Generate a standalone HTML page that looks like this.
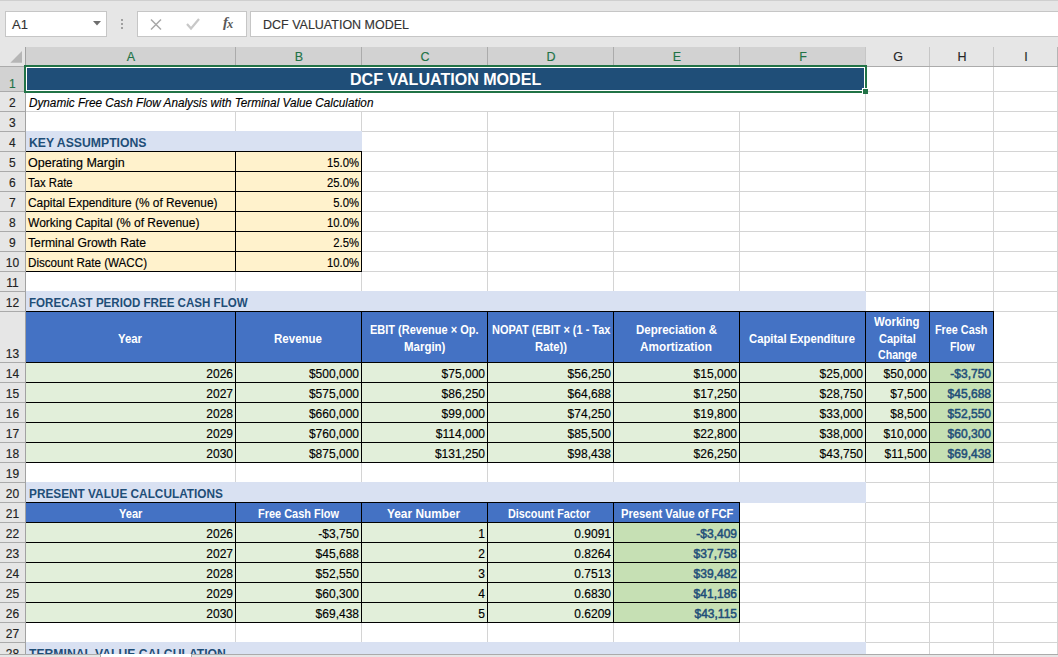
<!DOCTYPE html>
<html><head><meta charset="utf-8"><style>
html,body{margin:0;padding:0;}
body{width:1058px;height:657px;overflow:hidden;position:relative;background:#fff;font-family:'Liberation Sans', sans-serif;}
body>div,body>svg{position:absolute;}
</style></head><body>
<div style="left:0px;top:0px;width:1058px;height:47px;background:#e6e6e6;"></div>
<div style="left:0px;top:0px;width:1058px;height:1px;background:#cfcfcf;"></div>
<div style="left:5px;top:11px;width:102px;height:26px;background:#c6c6c6;"></div>
<div style="left:6px;top:12px;width:100px;height:24px;background:#ffffff;"></div>
<div style="top:18px;font-family:'Liberation Sans', sans-serif;font-size:13px;line-height:13px;color:#333;white-space:nowrap;-webkit-text-stroke:0.15px currentColor;left:12px;">A1</div>
<svg style="left:93px;top:21px" width="8" height="5"><path d="M0 0H8L4 4.5Z" fill="#6e6e6e"/></svg>
<div style="left:121px;top:19px;width:2px;height:2px;background:#a0a0a0;"></div>
<div style="left:121px;top:23px;width:2px;height:2px;background:#a0a0a0;"></div>
<div style="left:121px;top:27px;width:2px;height:2px;background:#a0a0a0;"></div>
<div style="left:137px;top:11px;width:110px;height:26px;background:#c6c6c6;"></div>
<div style="left:138px;top:12px;width:108px;height:24px;background:#ffffff;"></div>
<svg style="left:148px;top:17px" width="16" height="14"><path d="M3 2.5L13 12.5M13 2.5L3 12.5" stroke="#a8a8a8" stroke-width="1.5" fill="none"/></svg>
<svg style="left:184px;top:16px" width="18" height="15"><path d="M3 8L7 12.5L15 3" stroke="#c8c8c8" stroke-width="2.2" fill="none"/></svg>
<div style="left:223px;top:14px;font-family:'Liberation Serif',serif;font-style:italic;font-size:15px;line-height:16px;color:#595959;font-weight:bold">f<span style="font-size:12.5px;position:relative;top:1px;left:-1px">x</span></div>
<div style="left:250px;top:11px;width:808px;height:26px;background:#c6c6c6;"></div>
<div style="left:251px;top:12px;width:807px;height:24px;background:#ffffff;"></div>
<div style="top:18px;font-family:'Liberation Sans', sans-serif;font-size:13px;line-height:13px;color:#333;white-space:nowrap;-webkit-text-stroke:0.15px currentColor;left:262.70px;transform:scaleX(0.9612);transform-origin:0 0;">DCF VALUATION MODEL</div>
<div style="left:0px;top:47px;width:1058px;height:20px;background:#e6e6e6;"></div>
<div style="left:26px;top:47px;width:840px;height:19px;background:#d2d2d2;"></div>
<div style="left:0px;top:66px;width:1058px;height:1px;background:#ababab;"></div>
<svg style="left:0px;top:47px" width="25" height="19"><path d="M22 4V15.7H10.3Z" fill="#b6b6b6"/></svg>
<div style="left:235px;top:47px;width:1px;height:19px;background:#ababab;"></div>
<div style="left:361px;top:47px;width:1px;height:19px;background:#ababab;"></div>
<div style="left:487px;top:47px;width:1px;height:19px;background:#ababab;"></div>
<div style="left:613px;top:47px;width:1px;height:19px;background:#ababab;"></div>
<div style="left:739px;top:47px;width:1px;height:19px;background:#ababab;"></div>
<div style="left:865px;top:47px;width:1px;height:19px;background:#c6c6c6;"></div>
<div style="left:929px;top:47px;width:1px;height:19px;background:#c6c6c6;"></div>
<div style="left:993px;top:47px;width:1px;height:19px;background:#c6c6c6;"></div>
<div style="left:1057px;top:47px;width:1px;height:19px;background:#b4b4b4;"></div>
<div style="left:25px;top:47px;width:1px;height:19px;background:#c6c6c6;"></div>
<div style="top:51px;font-family:'Liberation Sans', sans-serif;font-size:12.5px;line-height:12.5px;color:#217346;white-space:nowrap;-webkit-text-stroke:0.15px currentColor;left:-169.0px;width:600px;text-align:center;">A</div>
<div style="top:51px;font-family:'Liberation Sans', sans-serif;font-size:12.5px;line-height:12.5px;color:#217346;white-space:nowrap;-webkit-text-stroke:0.15px currentColor;left:-1.0px;width:600px;text-align:center;">B</div>
<div style="top:51px;font-family:'Liberation Sans', sans-serif;font-size:12.5px;line-height:12.5px;color:#217346;white-space:nowrap;-webkit-text-stroke:0.15px currentColor;left:125.0px;width:600px;text-align:center;">C</div>
<div style="top:51px;font-family:'Liberation Sans', sans-serif;font-size:12.5px;line-height:12.5px;color:#217346;white-space:nowrap;-webkit-text-stroke:0.15px currentColor;left:251.0px;width:600px;text-align:center;">D</div>
<div style="top:51px;font-family:'Liberation Sans', sans-serif;font-size:12.5px;line-height:12.5px;color:#217346;white-space:nowrap;-webkit-text-stroke:0.15px currentColor;left:377.0px;width:600px;text-align:center;">E</div>
<div style="top:51px;font-family:'Liberation Sans', sans-serif;font-size:12.5px;line-height:12.5px;color:#217346;white-space:nowrap;-webkit-text-stroke:0.15px currentColor;left:503.0px;width:600px;text-align:center;">F</div>
<div style="top:51px;font-family:'Liberation Sans', sans-serif;font-size:12.5px;line-height:12.5px;color:#262626;white-space:nowrap;-webkit-text-stroke:0.15px currentColor;left:598.0px;width:600px;text-align:center;">G</div>
<div style="top:51px;font-family:'Liberation Sans', sans-serif;font-size:12.5px;line-height:12.5px;color:#262626;white-space:nowrap;-webkit-text-stroke:0.15px currentColor;left:662.0px;width:600px;text-align:center;">H</div>
<div style="top:51px;font-family:'Liberation Sans', sans-serif;font-size:12.5px;line-height:12.5px;color:#262626;white-space:nowrap;-webkit-text-stroke:0.15px currentColor;left:726.0px;width:600px;text-align:center;">I</div>
<div style="left:0px;top:67px;width:25px;height:587px;background:#e6e6e6;"></div>
<div style="left:0px;top:67px;width:25px;height:25px;background:#d2d2d2;"></div>
<div style="left:0px;top:91px;width:25px;height:1px;background:#aaaaaa;"></div>
<div style="top:78px;font-family:'Liberation Sans', sans-serif;font-size:12px;line-height:12px;color:#217346;white-space:nowrap;-webkit-text-stroke:0.15px currentColor;left:-287.6px;width:600px;text-align:center;">1</div>
<div style="left:0px;top:111px;width:25px;height:1px;background:#aaaaaa;"></div>
<div style="top:97px;font-family:'Liberation Sans', sans-serif;font-size:12px;line-height:12px;color:#222;white-space:nowrap;-webkit-text-stroke:0.15px currentColor;left:-287.6px;width:600px;text-align:center;">2</div>
<div style="left:0px;top:131px;width:25px;height:1px;background:#aaaaaa;"></div>
<div style="top:117px;font-family:'Liberation Sans', sans-serif;font-size:12px;line-height:12px;color:#222;white-space:nowrap;-webkit-text-stroke:0.15px currentColor;left:-287.6px;width:600px;text-align:center;">3</div>
<div style="left:0px;top:151px;width:25px;height:1px;background:#aaaaaa;"></div>
<div style="top:137px;font-family:'Liberation Sans', sans-serif;font-size:12px;line-height:12px;color:#222;white-space:nowrap;-webkit-text-stroke:0.15px currentColor;left:-287.6px;width:600px;text-align:center;">4</div>
<div style="left:0px;top:171px;width:25px;height:1px;background:#aaaaaa;"></div>
<div style="top:157px;font-family:'Liberation Sans', sans-serif;font-size:12px;line-height:12px;color:#222;white-space:nowrap;-webkit-text-stroke:0.15px currentColor;left:-287.6px;width:600px;text-align:center;">5</div>
<div style="left:0px;top:191px;width:25px;height:1px;background:#aaaaaa;"></div>
<div style="top:177px;font-family:'Liberation Sans', sans-serif;font-size:12px;line-height:12px;color:#222;white-space:nowrap;-webkit-text-stroke:0.15px currentColor;left:-287.6px;width:600px;text-align:center;">6</div>
<div style="left:0px;top:211px;width:25px;height:1px;background:#aaaaaa;"></div>
<div style="top:197px;font-family:'Liberation Sans', sans-serif;font-size:12px;line-height:12px;color:#222;white-space:nowrap;-webkit-text-stroke:0.15px currentColor;left:-287.6px;width:600px;text-align:center;">7</div>
<div style="left:0px;top:231px;width:25px;height:1px;background:#aaaaaa;"></div>
<div style="top:217px;font-family:'Liberation Sans', sans-serif;font-size:12px;line-height:12px;color:#222;white-space:nowrap;-webkit-text-stroke:0.15px currentColor;left:-287.6px;width:600px;text-align:center;">8</div>
<div style="left:0px;top:251px;width:25px;height:1px;background:#aaaaaa;"></div>
<div style="top:237px;font-family:'Liberation Sans', sans-serif;font-size:12px;line-height:12px;color:#222;white-space:nowrap;-webkit-text-stroke:0.15px currentColor;left:-287.6px;width:600px;text-align:center;">9</div>
<div style="left:0px;top:271px;width:25px;height:1px;background:#aaaaaa;"></div>
<div style="top:257px;font-family:'Liberation Sans', sans-serif;font-size:12px;line-height:12px;color:#222;white-space:nowrap;-webkit-text-stroke:0.15px currentColor;left:-287.6px;width:600px;text-align:center;">10</div>
<div style="left:0px;top:291px;width:25px;height:1px;background:#aaaaaa;"></div>
<div style="top:277px;font-family:'Liberation Sans', sans-serif;font-size:12px;line-height:12px;color:#222;white-space:nowrap;-webkit-text-stroke:0.15px currentColor;left:-287.6px;width:600px;text-align:center;">11</div>
<div style="left:0px;top:311px;width:25px;height:1px;background:#aaaaaa;"></div>
<div style="top:297px;font-family:'Liberation Sans', sans-serif;font-size:12px;line-height:12px;color:#222;white-space:nowrap;-webkit-text-stroke:0.15px currentColor;left:-287.6px;width:600px;text-align:center;">12</div>
<div style="left:0px;top:362px;width:25px;height:1px;background:#aaaaaa;"></div>
<div style="top:348px;font-family:'Liberation Sans', sans-serif;font-size:12px;line-height:12px;color:#222;white-space:nowrap;-webkit-text-stroke:0.15px currentColor;left:-287.6px;width:600px;text-align:center;">13</div>
<div style="left:0px;top:382px;width:25px;height:1px;background:#aaaaaa;"></div>
<div style="top:368px;font-family:'Liberation Sans', sans-serif;font-size:12px;line-height:12px;color:#222;white-space:nowrap;-webkit-text-stroke:0.15px currentColor;left:-287.6px;width:600px;text-align:center;">14</div>
<div style="left:0px;top:402px;width:25px;height:1px;background:#aaaaaa;"></div>
<div style="top:388px;font-family:'Liberation Sans', sans-serif;font-size:12px;line-height:12px;color:#222;white-space:nowrap;-webkit-text-stroke:0.15px currentColor;left:-287.6px;width:600px;text-align:center;">15</div>
<div style="left:0px;top:422px;width:25px;height:1px;background:#aaaaaa;"></div>
<div style="top:408px;font-family:'Liberation Sans', sans-serif;font-size:12px;line-height:12px;color:#222;white-space:nowrap;-webkit-text-stroke:0.15px currentColor;left:-287.6px;width:600px;text-align:center;">16</div>
<div style="left:0px;top:442px;width:25px;height:1px;background:#aaaaaa;"></div>
<div style="top:428px;font-family:'Liberation Sans', sans-serif;font-size:12px;line-height:12px;color:#222;white-space:nowrap;-webkit-text-stroke:0.15px currentColor;left:-287.6px;width:600px;text-align:center;">17</div>
<div style="left:0px;top:462px;width:25px;height:1px;background:#aaaaaa;"></div>
<div style="top:448px;font-family:'Liberation Sans', sans-serif;font-size:12px;line-height:12px;color:#222;white-space:nowrap;-webkit-text-stroke:0.15px currentColor;left:-287.6px;width:600px;text-align:center;">18</div>
<div style="left:0px;top:482px;width:25px;height:1px;background:#aaaaaa;"></div>
<div style="top:468px;font-family:'Liberation Sans', sans-serif;font-size:12px;line-height:12px;color:#222;white-space:nowrap;-webkit-text-stroke:0.15px currentColor;left:-287.6px;width:600px;text-align:center;">19</div>
<div style="left:0px;top:502px;width:25px;height:1px;background:#aaaaaa;"></div>
<div style="top:488px;font-family:'Liberation Sans', sans-serif;font-size:12px;line-height:12px;color:#222;white-space:nowrap;-webkit-text-stroke:0.15px currentColor;left:-287.6px;width:600px;text-align:center;">20</div>
<div style="left:0px;top:522px;width:25px;height:1px;background:#aaaaaa;"></div>
<div style="top:508px;font-family:'Liberation Sans', sans-serif;font-size:12px;line-height:12px;color:#222;white-space:nowrap;-webkit-text-stroke:0.15px currentColor;left:-287.6px;width:600px;text-align:center;">21</div>
<div style="left:0px;top:542px;width:25px;height:1px;background:#aaaaaa;"></div>
<div style="top:528px;font-family:'Liberation Sans', sans-serif;font-size:12px;line-height:12px;color:#222;white-space:nowrap;-webkit-text-stroke:0.15px currentColor;left:-287.6px;width:600px;text-align:center;">22</div>
<div style="left:0px;top:562px;width:25px;height:1px;background:#aaaaaa;"></div>
<div style="top:548px;font-family:'Liberation Sans', sans-serif;font-size:12px;line-height:12px;color:#222;white-space:nowrap;-webkit-text-stroke:0.15px currentColor;left:-287.6px;width:600px;text-align:center;">23</div>
<div style="left:0px;top:582px;width:25px;height:1px;background:#aaaaaa;"></div>
<div style="top:568px;font-family:'Liberation Sans', sans-serif;font-size:12px;line-height:12px;color:#222;white-space:nowrap;-webkit-text-stroke:0.15px currentColor;left:-287.6px;width:600px;text-align:center;">24</div>
<div style="left:0px;top:602px;width:25px;height:1px;background:#aaaaaa;"></div>
<div style="top:588px;font-family:'Liberation Sans', sans-serif;font-size:12px;line-height:12px;color:#222;white-space:nowrap;-webkit-text-stroke:0.15px currentColor;left:-287.6px;width:600px;text-align:center;">25</div>
<div style="left:0px;top:622px;width:25px;height:1px;background:#aaaaaa;"></div>
<div style="top:608px;font-family:'Liberation Sans', sans-serif;font-size:12px;line-height:12px;color:#222;white-space:nowrap;-webkit-text-stroke:0.15px currentColor;left:-287.6px;width:600px;text-align:center;">26</div>
<div style="left:0px;top:642px;width:25px;height:1px;background:#aaaaaa;"></div>
<div style="top:628px;font-family:'Liberation Sans', sans-serif;font-size:12px;line-height:12px;color:#222;white-space:nowrap;-webkit-text-stroke:0.15px currentColor;left:-287.6px;width:600px;text-align:center;">27</div>
<div style="top:648px;font-family:'Liberation Sans', sans-serif;font-size:12px;line-height:12px;color:#222;white-space:nowrap;-webkit-text-stroke:0.15px currentColor;left:-287.6px;width:600px;text-align:center;">28</div>
<div style="left:26px;top:67px;width:1032px;height:587px;background:#ffffff;"></div>
<div style="left:235px;top:112px;width:1px;height:542px;background:#d4d4d4;"></div>
<div style="left:361px;top:112px;width:1px;height:542px;background:#d4d4d4;"></div>
<div style="left:487px;top:112px;width:1px;height:542px;background:#d4d4d4;"></div>
<div style="left:613px;top:112px;width:1px;height:542px;background:#d4d4d4;"></div>
<div style="left:739px;top:112px;width:1px;height:542px;background:#d4d4d4;"></div>
<div style="left:865px;top:67px;width:1px;height:587px;background:#d4d4d4;"></div>
<div style="left:929px;top:67px;width:1px;height:587px;background:#d4d4d4;"></div>
<div style="left:993px;top:67px;width:1px;height:587px;background:#d4d4d4;"></div>
<div style="left:1057px;top:67px;width:1px;height:587px;background:#d4d4d4;"></div>
<div style="left:26px;top:91px;width:1032px;height:1px;background:#d4d4d4;"></div>
<div style="left:26px;top:111px;width:1032px;height:1px;background:#d4d4d4;"></div>
<div style="left:26px;top:131px;width:1032px;height:1px;background:#d4d4d4;"></div>
<div style="left:26px;top:151px;width:1032px;height:1px;background:#d4d4d4;"></div>
<div style="left:26px;top:171px;width:1032px;height:1px;background:#d4d4d4;"></div>
<div style="left:26px;top:191px;width:1032px;height:1px;background:#d4d4d4;"></div>
<div style="left:26px;top:211px;width:1032px;height:1px;background:#d4d4d4;"></div>
<div style="left:26px;top:231px;width:1032px;height:1px;background:#d4d4d4;"></div>
<div style="left:26px;top:251px;width:1032px;height:1px;background:#d4d4d4;"></div>
<div style="left:26px;top:271px;width:1032px;height:1px;background:#d4d4d4;"></div>
<div style="left:26px;top:291px;width:1032px;height:1px;background:#d4d4d4;"></div>
<div style="left:26px;top:311px;width:1032px;height:1px;background:#d4d4d4;"></div>
<div style="left:26px;top:362px;width:1032px;height:1px;background:#d4d4d4;"></div>
<div style="left:26px;top:382px;width:1032px;height:1px;background:#d4d4d4;"></div>
<div style="left:26px;top:402px;width:1032px;height:1px;background:#d4d4d4;"></div>
<div style="left:26px;top:422px;width:1032px;height:1px;background:#d4d4d4;"></div>
<div style="left:26px;top:442px;width:1032px;height:1px;background:#d4d4d4;"></div>
<div style="left:26px;top:462px;width:1032px;height:1px;background:#d4d4d4;"></div>
<div style="left:26px;top:482px;width:1032px;height:1px;background:#d4d4d4;"></div>
<div style="left:26px;top:502px;width:1032px;height:1px;background:#d4d4d4;"></div>
<div style="left:26px;top:522px;width:1032px;height:1px;background:#d4d4d4;"></div>
<div style="left:26px;top:542px;width:1032px;height:1px;background:#d4d4d4;"></div>
<div style="left:26px;top:562px;width:1032px;height:1px;background:#d4d4d4;"></div>
<div style="left:26px;top:582px;width:1032px;height:1px;background:#d4d4d4;"></div>
<div style="left:26px;top:602px;width:1032px;height:1px;background:#d4d4d4;"></div>
<div style="left:26px;top:622px;width:1032px;height:1px;background:#d4d4d4;"></div>
<div style="left:26px;top:642px;width:1032px;height:1px;background:#d4d4d4;"></div>
<div style="left:26px;top:67px;width:840px;height:25px;background:#1f4e78;"></div>
<div style="left:26px;top:131px;width:336px;height:21px;background:#d9e1f2;"></div>
<div style="left:26px;top:151px;width:336px;height:121px;background:#fff2cc;"></div>
<div style="left:26px;top:291px;width:840px;height:21px;background:#d9e1f2;"></div>
<div style="left:26px;top:311px;width:968px;height:52px;background:#4472c4;"></div>
<div style="left:26px;top:362px;width:904px;height:101px;background:#e2efda;"></div>
<div style="left:929px;top:362px;width:65px;height:101px;background:#c6e0b4;"></div>
<div style="left:26px;top:482px;width:840px;height:21px;background:#d9e1f2;"></div>
<div style="left:26px;top:502px;width:714px;height:21px;background:#4472c4;"></div>
<div style="left:26px;top:522px;width:588px;height:101px;background:#e2efda;"></div>
<div style="left:613px;top:522px;width:127px;height:101px;background:#c6e0b4;"></div>
<div style="left:26px;top:642px;width:840px;height:12px;background:#d9e1f2;"></div>
<div style="left:25px;top:151px;width:1px;height:121px;background:#000;"></div>
<div style="left:235px;top:151px;width:1px;height:121px;background:#000;"></div>
<div style="left:361px;top:151px;width:1px;height:121px;background:#000;"></div>
<div style="left:25px;top:151px;width:337px;height:1px;background:#000;"></div>
<div style="left:25px;top:171px;width:337px;height:1px;background:#000;"></div>
<div style="left:25px;top:191px;width:337px;height:1px;background:#000;"></div>
<div style="left:25px;top:211px;width:337px;height:1px;background:#000;"></div>
<div style="left:25px;top:231px;width:337px;height:1px;background:#000;"></div>
<div style="left:25px;top:251px;width:337px;height:1px;background:#000;"></div>
<div style="left:25px;top:271px;width:337px;height:1px;background:#000;"></div>
<div style="left:25px;top:311px;width:1px;height:152px;background:#000;"></div>
<div style="left:235px;top:311px;width:1px;height:152px;background:#000;"></div>
<div style="left:361px;top:311px;width:1px;height:152px;background:#000;"></div>
<div style="left:487px;top:311px;width:1px;height:152px;background:#000;"></div>
<div style="left:613px;top:311px;width:1px;height:152px;background:#000;"></div>
<div style="left:739px;top:311px;width:1px;height:152px;background:#000;"></div>
<div style="left:865px;top:311px;width:1px;height:152px;background:#000;"></div>
<div style="left:929px;top:311px;width:1px;height:152px;background:#000;"></div>
<div style="left:993px;top:311px;width:1px;height:152px;background:#000;"></div>
<div style="left:25px;top:311px;width:969px;height:1px;background:#000;"></div>
<div style="left:25px;top:362px;width:969px;height:1px;background:#000;"></div>
<div style="left:25px;top:382px;width:969px;height:1px;background:#000;"></div>
<div style="left:25px;top:402px;width:969px;height:1px;background:#000;"></div>
<div style="left:25px;top:422px;width:969px;height:1px;background:#000;"></div>
<div style="left:25px;top:442px;width:969px;height:1px;background:#000;"></div>
<div style="left:25px;top:462px;width:969px;height:1px;background:#000;"></div>
<div style="left:25px;top:502px;width:1px;height:121px;background:#000;"></div>
<div style="left:235px;top:502px;width:1px;height:121px;background:#000;"></div>
<div style="left:361px;top:502px;width:1px;height:121px;background:#000;"></div>
<div style="left:487px;top:502px;width:1px;height:121px;background:#000;"></div>
<div style="left:613px;top:502px;width:1px;height:121px;background:#000;"></div>
<div style="left:739px;top:502px;width:1px;height:121px;background:#000;"></div>
<div style="left:25px;top:502px;width:715px;height:1px;background:#000;"></div>
<div style="left:25px;top:522px;width:715px;height:1px;background:#000;"></div>
<div style="left:25px;top:542px;width:715px;height:1px;background:#000;"></div>
<div style="left:25px;top:562px;width:715px;height:1px;background:#000;"></div>
<div style="left:25px;top:582px;width:715px;height:1px;background:#000;"></div>
<div style="left:25px;top:602px;width:715px;height:1px;background:#000;"></div>
<div style="left:25px;top:622px;width:715px;height:1px;background:#000;"></div>
<div style="top:72px;font-family:'Liberation Sans', sans-serif;font-size:16px;line-height:16px;color:#fff;white-space:nowrap;font-weight:bold;left:350.00px;transform:scaleX(1.0037);transform-origin:0 0;">DCF VALUATION MODEL</div>
<div style="top:97px;font-family:'Liberation Sans', sans-serif;font-size:12px;line-height:12px;color:#000;white-space:nowrap;font-style:italic;-webkit-text-stroke:0.15px currentColor;left:28.70px;transform:scaleX(0.9781);transform-origin:0 0;">Dynamic Free Cash Flow Analysis with Terminal Value Calculation</div>
<div style="top:137px;font-family:'Liberation Sans', sans-serif;font-size:12px;line-height:12px;color:#1f4e78;white-space:nowrap;font-weight:bold;left:28.60px;transform:scaleX(1.0183);transform-origin:0 0;">KEY ASSUMPTIONS</div>
<div style="top:157px;font-family:'Liberation Sans', sans-serif;font-size:12px;line-height:12px;color:#000;white-space:nowrap;-webkit-text-stroke:0.15px currentColor;left:28.40px;transform:scaleX(1.0430);transform-origin:0 0;">Operating Margin</div>
<div style="top:157px;font-family:'Liberation Sans', sans-serif;font-size:12px;line-height:12px;color:#000;white-space:nowrap;-webkit-text-stroke:0.15px currentColor;left:-41px;width:400px;text-align:right;transform:scaleX(0.94);transform-origin:right;">15.0%</div>
<div style="top:177px;font-family:'Liberation Sans', sans-serif;font-size:12px;line-height:12px;color:#000;white-space:nowrap;-webkit-text-stroke:0.15px currentColor;left:28.40px;transform:scaleX(0.9417);transform-origin:0 0;">Tax Rate</div>
<div style="top:177px;font-family:'Liberation Sans', sans-serif;font-size:12px;line-height:12px;color:#000;white-space:nowrap;-webkit-text-stroke:0.15px currentColor;left:-41px;width:400px;text-align:right;transform:scaleX(0.94);transform-origin:right;">25.0%</div>
<div style="top:197px;font-family:'Liberation Sans', sans-serif;font-size:12px;line-height:12px;color:#000;white-space:nowrap;-webkit-text-stroke:0.15px currentColor;left:28.40px;transform:scaleX(0.9901);transform-origin:0 0;">Capital Expenditure (% of Revenue)</div>
<div style="top:197px;font-family:'Liberation Sans', sans-serif;font-size:12px;line-height:12px;color:#000;white-space:nowrap;-webkit-text-stroke:0.15px currentColor;left:-41px;width:400px;text-align:right;transform:scaleX(0.94);transform-origin:right;">5.0%</div>
<div style="top:217px;font-family:'Liberation Sans', sans-serif;font-size:12px;line-height:12px;color:#000;white-space:nowrap;-webkit-text-stroke:0.15px currentColor;left:28.40px;transform:scaleX(1.0018);transform-origin:0 0;">Working Capital (% of Revenue)</div>
<div style="top:217px;font-family:'Liberation Sans', sans-serif;font-size:12px;line-height:12px;color:#000;white-space:nowrap;-webkit-text-stroke:0.15px currentColor;left:-41px;width:400px;text-align:right;transform:scaleX(0.94);transform-origin:right;">10.0%</div>
<div style="top:237px;font-family:'Liberation Sans', sans-serif;font-size:12px;line-height:12px;color:#000;white-space:nowrap;-webkit-text-stroke:0.15px currentColor;left:28.40px;transform:scaleX(1.0172);transform-origin:0 0;">Terminal Growth Rate</div>
<div style="top:237px;font-family:'Liberation Sans', sans-serif;font-size:12px;line-height:12px;color:#000;white-space:nowrap;-webkit-text-stroke:0.15px currentColor;left:-41px;width:400px;text-align:right;transform:scaleX(0.94);transform-origin:right;">2.5%</div>
<div style="top:257px;font-family:'Liberation Sans', sans-serif;font-size:12px;line-height:12px;color:#000;white-space:nowrap;-webkit-text-stroke:0.15px currentColor;left:28.40px;transform:scaleX(0.9683);transform-origin:0 0;">Discount Rate (WACC)</div>
<div style="top:257px;font-family:'Liberation Sans', sans-serif;font-size:12px;line-height:12px;color:#000;white-space:nowrap;-webkit-text-stroke:0.15px currentColor;left:-41px;width:400px;text-align:right;transform:scaleX(0.94);transform-origin:right;">10.0%</div>
<div style="top:297px;font-family:'Liberation Sans', sans-serif;font-size:12px;line-height:12px;color:#1f4e78;white-space:nowrap;font-weight:bold;left:28.50px;transform:scaleX(0.9648);transform-origin:0 0;">FORECAST PERIOD FREE CASH FLOW</div>
<div style="top:333px;font-family:'Liberation Sans', sans-serif;font-size:12px;line-height:12px;color:#fff;white-space:nowrap;font-weight:bold;left:118.40px;transform:scaleX(0.9462);transform-origin:0 0;">Year</div>
<div style="top:333px;font-family:'Liberation Sans', sans-serif;font-size:12px;line-height:12px;color:#fff;white-space:nowrap;font-weight:bold;left:274.00px;transform:scaleX(0.9600);transform-origin:0 0;">Revenue</div>
<div style="top:324px;font-family:'Liberation Sans', sans-serif;font-size:12px;line-height:12px;color:#fff;white-space:nowrap;font-weight:bold;left:370.30px;transform:scaleX(0.9169);transform-origin:0 0;">EBIT (Revenue × Op.</div>
<div style="top:341px;font-family:'Liberation Sans', sans-serif;font-size:12px;line-height:12px;color:#fff;white-space:nowrap;font-weight:bold;left:403.70px;transform:scaleX(0.9558);transform-origin:0 0;">Margin)</div>
<div style="top:324px;font-family:'Liberation Sans', sans-serif;font-size:12px;line-height:12px;color:#fff;white-space:nowrap;font-weight:bold;left:491.50px;transform:scaleX(0.9131);transform-origin:0 0;">NOPAT (EBIT × (1 - Tax</div>
<div style="top:341px;font-family:'Liberation Sans', sans-serif;font-size:12px;line-height:12px;color:#fff;white-space:nowrap;font-weight:bold;left:534.50px;transform:scaleX(0.9382);transform-origin:0 0;">Rate))</div>
<div style="top:324px;font-family:'Liberation Sans', sans-serif;font-size:12px;line-height:12px;color:#fff;white-space:nowrap;font-weight:bold;left:635.50px;transform:scaleX(0.9576);transform-origin:0 0;">Depreciation &amp;</div>
<div style="top:341px;font-family:'Liberation Sans', sans-serif;font-size:12px;line-height:12px;color:#fff;white-space:nowrap;font-weight:bold;left:640.40px;transform:scaleX(0.9808);transform-origin:0 0;">Amortization</div>
<div style="top:333px;font-family:'Liberation Sans', sans-serif;font-size:12px;line-height:12px;color:#fff;white-space:nowrap;font-weight:bold;left:749.30px;transform:scaleX(0.9398);transform-origin:0 0;">Capital Expenditure</div>
<div style="top:316px;font-family:'Liberation Sans', sans-serif;font-size:12px;line-height:12px;color:#fff;white-space:nowrap;font-weight:bold;left:874.40px;transform:scaleX(0.9500);transform-origin:0 0;">Working</div>
<div style="top:333px;font-family:'Liberation Sans', sans-serif;font-size:12px;line-height:12px;color:#fff;white-space:nowrap;font-weight:bold;left:879.30px;transform:scaleX(0.9200);transform-origin:0 0;">Capital</div>
<div style="top:349px;font-family:'Liberation Sans', sans-serif;font-size:12px;line-height:12px;color:#fff;white-space:nowrap;font-weight:bold;left:877.70px;transform:scaleX(0.8841);transform-origin:0 0;">Change</div>
<div style="top:324px;font-family:'Liberation Sans', sans-serif;font-size:12px;line-height:12px;color:#fff;white-space:nowrap;font-weight:bold;left:935.40px;transform:scaleX(0.9017);transform-origin:0 0;">Free Cash</div>
<div style="top:341px;font-family:'Liberation Sans', sans-serif;font-size:12px;line-height:12px;color:#fff;white-space:nowrap;font-weight:bold;left:949.60px;transform:scaleX(0.8964);transform-origin:0 0;">Flow</div>
<div style="top:368px;font-family:'Liberation Sans', sans-serif;font-size:12px;line-height:12px;color:#000;white-space:nowrap;-webkit-text-stroke:0.15px currentColor;left:-167px;width:400px;text-align:right;">2026</div>
<div style="top:368px;font-family:'Liberation Sans', sans-serif;font-size:12px;line-height:12px;color:#000;white-space:nowrap;-webkit-text-stroke:0.15px currentColor;left:-41px;width:400px;text-align:right;">$500,000</div>
<div style="top:368px;font-family:'Liberation Sans', sans-serif;font-size:12px;line-height:12px;color:#000;white-space:nowrap;-webkit-text-stroke:0.15px currentColor;left:85px;width:400px;text-align:right;">$75,000</div>
<div style="top:368px;font-family:'Liberation Sans', sans-serif;font-size:12px;line-height:12px;color:#000;white-space:nowrap;-webkit-text-stroke:0.15px currentColor;left:211px;width:400px;text-align:right;">$56,250</div>
<div style="top:368px;font-family:'Liberation Sans', sans-serif;font-size:12px;line-height:12px;color:#000;white-space:nowrap;-webkit-text-stroke:0.15px currentColor;left:337px;width:400px;text-align:right;">$15,000</div>
<div style="top:368px;font-family:'Liberation Sans', sans-serif;font-size:12px;line-height:12px;color:#000;white-space:nowrap;-webkit-text-stroke:0.15px currentColor;left:463px;width:400px;text-align:right;">$25,000</div>
<div style="top:368px;font-family:'Liberation Sans', sans-serif;font-size:12px;line-height:12px;color:#000;white-space:nowrap;-webkit-text-stroke:0.15px currentColor;left:527px;width:400px;text-align:right;">$50,000</div>
<div style="top:368px;font-family:'Liberation Sans', sans-serif;font-size:12px;line-height:12px;color:#1f4e78;white-space:nowrap;left:591px;width:400px;text-align:right;-webkit-text-stroke:0.5px #1f4e78;">-$3,750</div>
<div style="top:388px;font-family:'Liberation Sans', sans-serif;font-size:12px;line-height:12px;color:#000;white-space:nowrap;-webkit-text-stroke:0.15px currentColor;left:-167px;width:400px;text-align:right;">2027</div>
<div style="top:388px;font-family:'Liberation Sans', sans-serif;font-size:12px;line-height:12px;color:#000;white-space:nowrap;-webkit-text-stroke:0.15px currentColor;left:-41px;width:400px;text-align:right;">$575,000</div>
<div style="top:388px;font-family:'Liberation Sans', sans-serif;font-size:12px;line-height:12px;color:#000;white-space:nowrap;-webkit-text-stroke:0.15px currentColor;left:85px;width:400px;text-align:right;">$86,250</div>
<div style="top:388px;font-family:'Liberation Sans', sans-serif;font-size:12px;line-height:12px;color:#000;white-space:nowrap;-webkit-text-stroke:0.15px currentColor;left:211px;width:400px;text-align:right;">$64,688</div>
<div style="top:388px;font-family:'Liberation Sans', sans-serif;font-size:12px;line-height:12px;color:#000;white-space:nowrap;-webkit-text-stroke:0.15px currentColor;left:337px;width:400px;text-align:right;">$17,250</div>
<div style="top:388px;font-family:'Liberation Sans', sans-serif;font-size:12px;line-height:12px;color:#000;white-space:nowrap;-webkit-text-stroke:0.15px currentColor;left:463px;width:400px;text-align:right;">$28,750</div>
<div style="top:388px;font-family:'Liberation Sans', sans-serif;font-size:12px;line-height:12px;color:#000;white-space:nowrap;-webkit-text-stroke:0.15px currentColor;left:527px;width:400px;text-align:right;">$7,500</div>
<div style="top:388px;font-family:'Liberation Sans', sans-serif;font-size:12px;line-height:12px;color:#1f4e78;white-space:nowrap;left:591px;width:400px;text-align:right;-webkit-text-stroke:0.5px #1f4e78;">$45,688</div>
<div style="top:408px;font-family:'Liberation Sans', sans-serif;font-size:12px;line-height:12px;color:#000;white-space:nowrap;-webkit-text-stroke:0.15px currentColor;left:-167px;width:400px;text-align:right;">2028</div>
<div style="top:408px;font-family:'Liberation Sans', sans-serif;font-size:12px;line-height:12px;color:#000;white-space:nowrap;-webkit-text-stroke:0.15px currentColor;left:-41px;width:400px;text-align:right;">$660,000</div>
<div style="top:408px;font-family:'Liberation Sans', sans-serif;font-size:12px;line-height:12px;color:#000;white-space:nowrap;-webkit-text-stroke:0.15px currentColor;left:85px;width:400px;text-align:right;">$99,000</div>
<div style="top:408px;font-family:'Liberation Sans', sans-serif;font-size:12px;line-height:12px;color:#000;white-space:nowrap;-webkit-text-stroke:0.15px currentColor;left:211px;width:400px;text-align:right;">$74,250</div>
<div style="top:408px;font-family:'Liberation Sans', sans-serif;font-size:12px;line-height:12px;color:#000;white-space:nowrap;-webkit-text-stroke:0.15px currentColor;left:337px;width:400px;text-align:right;">$19,800</div>
<div style="top:408px;font-family:'Liberation Sans', sans-serif;font-size:12px;line-height:12px;color:#000;white-space:nowrap;-webkit-text-stroke:0.15px currentColor;left:463px;width:400px;text-align:right;">$33,000</div>
<div style="top:408px;font-family:'Liberation Sans', sans-serif;font-size:12px;line-height:12px;color:#000;white-space:nowrap;-webkit-text-stroke:0.15px currentColor;left:527px;width:400px;text-align:right;">$8,500</div>
<div style="top:408px;font-family:'Liberation Sans', sans-serif;font-size:12px;line-height:12px;color:#1f4e78;white-space:nowrap;left:591px;width:400px;text-align:right;-webkit-text-stroke:0.5px #1f4e78;">$52,550</div>
<div style="top:428px;font-family:'Liberation Sans', sans-serif;font-size:12px;line-height:12px;color:#000;white-space:nowrap;-webkit-text-stroke:0.15px currentColor;left:-167px;width:400px;text-align:right;">2029</div>
<div style="top:428px;font-family:'Liberation Sans', sans-serif;font-size:12px;line-height:12px;color:#000;white-space:nowrap;-webkit-text-stroke:0.15px currentColor;left:-41px;width:400px;text-align:right;">$760,000</div>
<div style="top:428px;font-family:'Liberation Sans', sans-serif;font-size:12px;line-height:12px;color:#000;white-space:nowrap;-webkit-text-stroke:0.15px currentColor;left:85px;width:400px;text-align:right;">$114,000</div>
<div style="top:428px;font-family:'Liberation Sans', sans-serif;font-size:12px;line-height:12px;color:#000;white-space:nowrap;-webkit-text-stroke:0.15px currentColor;left:211px;width:400px;text-align:right;">$85,500</div>
<div style="top:428px;font-family:'Liberation Sans', sans-serif;font-size:12px;line-height:12px;color:#000;white-space:nowrap;-webkit-text-stroke:0.15px currentColor;left:337px;width:400px;text-align:right;">$22,800</div>
<div style="top:428px;font-family:'Liberation Sans', sans-serif;font-size:12px;line-height:12px;color:#000;white-space:nowrap;-webkit-text-stroke:0.15px currentColor;left:463px;width:400px;text-align:right;">$38,000</div>
<div style="top:428px;font-family:'Liberation Sans', sans-serif;font-size:12px;line-height:12px;color:#000;white-space:nowrap;-webkit-text-stroke:0.15px currentColor;left:527px;width:400px;text-align:right;">$10,000</div>
<div style="top:428px;font-family:'Liberation Sans', sans-serif;font-size:12px;line-height:12px;color:#1f4e78;white-space:nowrap;left:591px;width:400px;text-align:right;-webkit-text-stroke:0.5px #1f4e78;">$60,300</div>
<div style="top:448px;font-family:'Liberation Sans', sans-serif;font-size:12px;line-height:12px;color:#000;white-space:nowrap;-webkit-text-stroke:0.15px currentColor;left:-167px;width:400px;text-align:right;">2030</div>
<div style="top:448px;font-family:'Liberation Sans', sans-serif;font-size:12px;line-height:12px;color:#000;white-space:nowrap;-webkit-text-stroke:0.15px currentColor;left:-41px;width:400px;text-align:right;">$875,000</div>
<div style="top:448px;font-family:'Liberation Sans', sans-serif;font-size:12px;line-height:12px;color:#000;white-space:nowrap;-webkit-text-stroke:0.15px currentColor;left:85px;width:400px;text-align:right;">$131,250</div>
<div style="top:448px;font-family:'Liberation Sans', sans-serif;font-size:12px;line-height:12px;color:#000;white-space:nowrap;-webkit-text-stroke:0.15px currentColor;left:211px;width:400px;text-align:right;">$98,438</div>
<div style="top:448px;font-family:'Liberation Sans', sans-serif;font-size:12px;line-height:12px;color:#000;white-space:nowrap;-webkit-text-stroke:0.15px currentColor;left:337px;width:400px;text-align:right;">$26,250</div>
<div style="top:448px;font-family:'Liberation Sans', sans-serif;font-size:12px;line-height:12px;color:#000;white-space:nowrap;-webkit-text-stroke:0.15px currentColor;left:463px;width:400px;text-align:right;">$43,750</div>
<div style="top:448px;font-family:'Liberation Sans', sans-serif;font-size:12px;line-height:12px;color:#000;white-space:nowrap;-webkit-text-stroke:0.15px currentColor;left:527px;width:400px;text-align:right;">$11,500</div>
<div style="top:448px;font-family:'Liberation Sans', sans-serif;font-size:12px;line-height:12px;color:#1f4e78;white-space:nowrap;left:591px;width:400px;text-align:right;-webkit-text-stroke:0.5px #1f4e78;">$69,438</div>
<div style="top:488px;font-family:'Liberation Sans', sans-serif;font-size:12px;line-height:12px;color:#1f4e78;white-space:nowrap;font-weight:bold;left:28.50px;transform:scaleX(0.9848);transform-origin:0 0;">PRESENT VALUE CALCULATIONS</div>
<div style="top:508px;font-family:'Liberation Sans', sans-serif;font-size:12px;line-height:12px;color:#fff;white-space:nowrap;font-weight:bold;left:118.50px;transform:scaleX(0.9231);transform-origin:0 0;">Year</div>
<div style="top:508px;font-family:'Liberation Sans', sans-serif;font-size:12px;line-height:12px;color:#fff;white-space:nowrap;font-weight:bold;left:257.60px;transform:scaleX(0.9124);transform-origin:0 0;">Free Cash Flow</div>
<div style="top:508px;font-family:'Liberation Sans', sans-serif;font-size:12px;line-height:12px;color:#fff;white-space:nowrap;font-weight:bold;left:387.30px;transform:scaleX(0.9892);transform-origin:0 0;">Year Number</div>
<div style="top:508px;font-family:'Liberation Sans', sans-serif;font-size:12px;line-height:12px;color:#fff;white-space:nowrap;font-weight:bold;left:508.40px;transform:scaleX(0.9000);transform-origin:0 0;">Discount Factor</div>
<div style="top:508px;font-family:'Liberation Sans', sans-serif;font-size:12px;line-height:12px;color:#fff;white-space:nowrap;font-weight:bold;left:620.50px;transform:scaleX(0.9367);transform-origin:0 0;">Present Value of FCF</div>
<div style="top:528px;font-family:'Liberation Sans', sans-serif;font-size:12px;line-height:12px;color:#000;white-space:nowrap;-webkit-text-stroke:0.15px currentColor;left:-167px;width:400px;text-align:right;">2026</div>
<div style="top:528px;font-family:'Liberation Sans', sans-serif;font-size:12px;line-height:12px;color:#000;white-space:nowrap;-webkit-text-stroke:0.15px currentColor;left:-41px;width:400px;text-align:right;">-$3,750</div>
<div style="top:528px;font-family:'Liberation Sans', sans-serif;font-size:12px;line-height:12px;color:#000;white-space:nowrap;-webkit-text-stroke:0.15px currentColor;left:85px;width:400px;text-align:right;">1</div>
<div style="top:528px;font-family:'Liberation Sans', sans-serif;font-size:12px;line-height:12px;color:#000;white-space:nowrap;-webkit-text-stroke:0.15px currentColor;left:211px;width:400px;text-align:right;">0.9091</div>
<div style="top:528px;font-family:'Liberation Sans', sans-serif;font-size:12px;line-height:12px;color:#1f4e78;white-space:nowrap;left:337px;width:400px;text-align:right;-webkit-text-stroke:0.5px #1f4e78;">-$3,409</div>
<div style="top:548px;font-family:'Liberation Sans', sans-serif;font-size:12px;line-height:12px;color:#000;white-space:nowrap;-webkit-text-stroke:0.15px currentColor;left:-167px;width:400px;text-align:right;">2027</div>
<div style="top:548px;font-family:'Liberation Sans', sans-serif;font-size:12px;line-height:12px;color:#000;white-space:nowrap;-webkit-text-stroke:0.15px currentColor;left:-41px;width:400px;text-align:right;">$45,688</div>
<div style="top:548px;font-family:'Liberation Sans', sans-serif;font-size:12px;line-height:12px;color:#000;white-space:nowrap;-webkit-text-stroke:0.15px currentColor;left:85px;width:400px;text-align:right;">2</div>
<div style="top:548px;font-family:'Liberation Sans', sans-serif;font-size:12px;line-height:12px;color:#000;white-space:nowrap;-webkit-text-stroke:0.15px currentColor;left:211px;width:400px;text-align:right;">0.8264</div>
<div style="top:548px;font-family:'Liberation Sans', sans-serif;font-size:12px;line-height:12px;color:#1f4e78;white-space:nowrap;left:337px;width:400px;text-align:right;-webkit-text-stroke:0.5px #1f4e78;">$37,758</div>
<div style="top:568px;font-family:'Liberation Sans', sans-serif;font-size:12px;line-height:12px;color:#000;white-space:nowrap;-webkit-text-stroke:0.15px currentColor;left:-167px;width:400px;text-align:right;">2028</div>
<div style="top:568px;font-family:'Liberation Sans', sans-serif;font-size:12px;line-height:12px;color:#000;white-space:nowrap;-webkit-text-stroke:0.15px currentColor;left:-41px;width:400px;text-align:right;">$52,550</div>
<div style="top:568px;font-family:'Liberation Sans', sans-serif;font-size:12px;line-height:12px;color:#000;white-space:nowrap;-webkit-text-stroke:0.15px currentColor;left:85px;width:400px;text-align:right;">3</div>
<div style="top:568px;font-family:'Liberation Sans', sans-serif;font-size:12px;line-height:12px;color:#000;white-space:nowrap;-webkit-text-stroke:0.15px currentColor;left:211px;width:400px;text-align:right;">0.7513</div>
<div style="top:568px;font-family:'Liberation Sans', sans-serif;font-size:12px;line-height:12px;color:#1f4e78;white-space:nowrap;left:337px;width:400px;text-align:right;-webkit-text-stroke:0.5px #1f4e78;">$39,482</div>
<div style="top:588px;font-family:'Liberation Sans', sans-serif;font-size:12px;line-height:12px;color:#000;white-space:nowrap;-webkit-text-stroke:0.15px currentColor;left:-167px;width:400px;text-align:right;">2029</div>
<div style="top:588px;font-family:'Liberation Sans', sans-serif;font-size:12px;line-height:12px;color:#000;white-space:nowrap;-webkit-text-stroke:0.15px currentColor;left:-41px;width:400px;text-align:right;">$60,300</div>
<div style="top:588px;font-family:'Liberation Sans', sans-serif;font-size:12px;line-height:12px;color:#000;white-space:nowrap;-webkit-text-stroke:0.15px currentColor;left:85px;width:400px;text-align:right;">4</div>
<div style="top:588px;font-family:'Liberation Sans', sans-serif;font-size:12px;line-height:12px;color:#000;white-space:nowrap;-webkit-text-stroke:0.15px currentColor;left:211px;width:400px;text-align:right;">0.6830</div>
<div style="top:588px;font-family:'Liberation Sans', sans-serif;font-size:12px;line-height:12px;color:#1f4e78;white-space:nowrap;left:337px;width:400px;text-align:right;-webkit-text-stroke:0.5px #1f4e78;">$41,186</div>
<div style="top:608px;font-family:'Liberation Sans', sans-serif;font-size:12px;line-height:12px;color:#000;white-space:nowrap;-webkit-text-stroke:0.15px currentColor;left:-167px;width:400px;text-align:right;">2030</div>
<div style="top:608px;font-family:'Liberation Sans', sans-serif;font-size:12px;line-height:12px;color:#000;white-space:nowrap;-webkit-text-stroke:0.15px currentColor;left:-41px;width:400px;text-align:right;">$69,438</div>
<div style="top:608px;font-family:'Liberation Sans', sans-serif;font-size:12px;line-height:12px;color:#000;white-space:nowrap;-webkit-text-stroke:0.15px currentColor;left:85px;width:400px;text-align:right;">5</div>
<div style="top:608px;font-family:'Liberation Sans', sans-serif;font-size:12px;line-height:12px;color:#000;white-space:nowrap;-webkit-text-stroke:0.15px currentColor;left:211px;width:400px;text-align:right;">0.6209</div>
<div style="top:608px;font-family:'Liberation Sans', sans-serif;font-size:12px;line-height:12px;color:#1f4e78;white-space:nowrap;left:337px;width:400px;text-align:right;-webkit-text-stroke:0.5px #1f4e78;">$43,115</div>
<div style="top:648px;font-family:'Liberation Sans', sans-serif;font-size:12px;line-height:12px;color:#1f4e78;white-space:nowrap;font-weight:bold;left:28.50px;transform:scaleX(1.0149);transform-origin:0 0;">TERMINAL VALUE CALCULATION</div>
<div style="left:25px;top:47px;width:1px;height:607px;background:#a2a2a2;"></div>
<div style="left:24px;top:65px;width:843px;height:2px;background:#217346;"></div>
<div style="left:24px;top:91px;width:838px;height:2px;background:#217346;"></div>
<div style="left:24px;top:65px;width:2px;height:28px;background:#217346;"></div>
<div style="left:865px;top:65px;width:2px;height:23px;background:#217346;"></div>
<div style="left:26px;top:67px;width:839px;height:1px;background:#fff;"></div>
<div style="left:26px;top:67px;width:1px;height:24px;background:#fff;"></div>
<div style="left:26px;top:90px;width:839px;height:1px;background:#fff;"></div>
<div style="left:864px;top:67px;width:1px;height:24px;background:#fff;"></div>
<div style="left:862px;top:88px;width:6px;height:6px;background:#fff;"></div>
<div style="left:863px;top:89px;width:5px;height:5px;background:#217346;"></div>
<div style="left:0px;top:654px;width:1058px;height:3px;background:#e6e6e6;"></div>
<div style="left:0px;top:654px;width:1058px;height:1px;background:#ababab;"></div>
<div style="left:101px;top:654px;width:90px;height:3px;background:#ffffff;"></div>
<div style="left:100px;top:654px;width:1px;height:3px;background:#ababab;"></div>
<div style="left:191px;top:654px;width:1px;height:3px;background:#ababab;"></div>
</body></html>
